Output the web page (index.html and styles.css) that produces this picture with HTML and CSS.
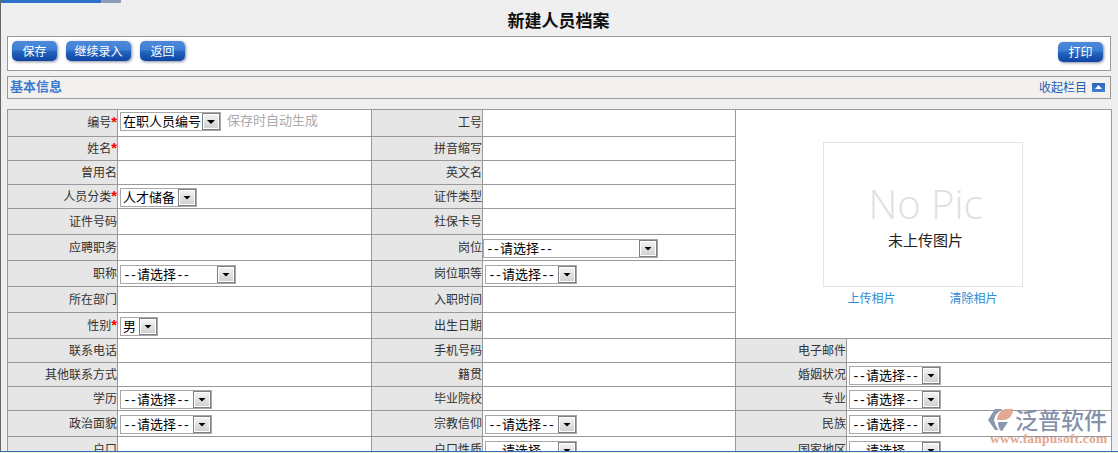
FILE: index.html
```html
<!DOCTYPE html>
<html lang="zh-CN">
<head>
<meta charset="utf-8">
<title>新建人员档案</title>
<link rel="stylesheet" href="styles.css">
</head>
<body>
<div class="page">
  <div class="loadbar"><span class="load-done"></span><span class="load-rest"></span></div>
  <h1 class="title">新建人员档案</h1>
  <div class="toolbar">
    <div class="btn-group">
      <a class="btn btn-s">保存</a>
      <a class="btn btn-l">继续录入</a>
      <a class="btn btn-s">返回</a>
    </div>
    <a class="btn btn-s btn-print">打印</a>
  </div>
  <div class="section">
    <span class="section-title">基本信息</span>
    <span class="collapse">收起栏目<span class="collapse-icon"></span></span>
  </div>
  <table class="form">
    <colgroup><col class="c1"><col class="c2"><col class="c3"><col class="c4"><col class="c5"><col class="c6"></colgroup>
    <tr class="h27">
      <th>编号<span class="req">*</span></th>
      <td class="top"><span class="sel w101"><span class="val">在职人员编号</span><span class="arrow"></span></span><span class="hint">保存时自动生成</span></td>
      <th>工号</th><td></td>
      <td class="photo" colspan="2" rowspan="9">
        <div class="photo-wrap">
          <div class="photo-box"><span class="nopic">No Pic</span><span class="nopic-cn">未上传图片</span></div>
          <div class="photo-links"><a>上传相片</a><a>清除相片</a></div>
        </div>
      </td>
    </tr>
    <tr class="h24"><th>姓名<span class="req">*</span></th><td></td><th>拼音缩写</th><td></td></tr>
    <tr class="h24"><th>曾用名</th><td></td><th>英文名</th><td></td></tr>
    <tr class="h24">
      <th>人员分类<span class="req">*</span></th>
      <td><span class="sel w77"><span class="val">人才储备</span><span class="arrow"></span></span></td>
      <th>证件类型</th><td></td>
    </tr>
    <tr class="h26"><th>证件号码</th><td></td><th>社保卡号</th><td></td></tr>
    <tr class="h26">
      <th>应聘职务</th><td></td><th>岗位</th>
      <td class="flush"><span class="sel w175"><span class="val"><span class="dash">--</span>请选择<span class="dash">--</span></span><span class="arrow"></span></span></td>
    </tr>
    <tr class="h26">
      <th>职称</th>
      <td><span class="sel w116"><span class="val"><span class="dash">--</span>请选择<span class="dash">--</span></span><span class="arrow"></span></span></td>
      <th>岗位职等</th>
      <td><span class="sel w92"><span class="val"><span class="dash">--</span>请选择<span class="dash">--</span></span><span class="arrow"></span></span></td>
    </tr>
    <tr class="h26"><th>所在部门</th><td></td><th>入职时间</th><td></td></tr>
    <tr class="h26">
      <th>性别<span class="req">*</span></th>
      <td><span class="sel w38"><span class="val">男</span><span class="arrow"></span></span></td>
      <th>出生日期</th><td></td>
    </tr>
    <tr class="h24"><th>联系电话</th><td></td><th>手机号码</th><td></td><th>电子邮件</th><td></td></tr>
    <tr class="h24">
      <th>其他联系方式</th><td></td><th>籍贯</th><td></td><th>婚姻状况</th>
      <td><span class="sel w92"><span class="val"><span class="dash">--</span>请选择<span class="dash">--</span></span><span class="arrow"></span></span></td>
    </tr>
    <tr class="h24">
      <th>学历</th>
      <td><span class="sel w92"><span class="val"><span class="dash">--</span>请选择<span class="dash">--</span></span><span class="arrow"></span></span></td>
      <th>毕业院校</th><td></td><th>专业</th>
      <td><span class="sel w92"><span class="val"><span class="dash">--</span>请选择<span class="dash">--</span></span><span class="arrow"></span></span></td>
    </tr>
    <tr class="h26">
      <th>政治面貌</th>
      <td><span class="sel w92"><span class="val"><span class="dash">--</span>请选择<span class="dash">--</span></span><span class="arrow"></span></span></td>
      <th>宗教信仰</th>
      <td><span class="sel w92"><span class="val"><span class="dash">--</span>请选择<span class="dash">--</span></span><span class="arrow"></span></span></td>
      <th>民族</th>
      <td><span class="sel w92"><span class="val"><span class="dash">--</span>请选择<span class="dash">--</span></span><span class="arrow"></span></span></td>
    </tr>
    <tr class="h26">
      <th>户口</th><td></td>
      <th>户口性质</th>
      <td><span class="sel w92"><span class="val"><span class="dash">--</span>请选择<span class="dash">--</span></span><span class="arrow"></span></span></td>
      <th>国家地区</th>
      <td><span class="sel w92"><span class="val"><span class="dash">--</span>请选择<span class="dash">--</span></span><span class="arrow"></span></span></td>
    </tr>
  </table>
  <div class="watermark">
    <svg class="wm-icon" width="26" height="24" viewBox="0 0 26 24">
      <path fill="#8a97ad" d="M7 1h7L7.5 7 6 12l1.5 5 3 5H7L0 12z"/>
      <path fill="#e3a88f" d="M17 1h8c0 6-3 10-9 11H9c0-5 3-9 8-11z"/>
      <path fill="#8a97ad" d="M10 14h10l-6 9h-1c-2-2-3-5-3-9z"/>
    </svg>
    <span class="wm-cn">泛普软件</span>
    <span class="wm-url">www.fanpusoft.com</span>
  </div>
  <span class="corner"></span>
</div>
</body>
</html>
```

FILE: styles.css
```css
* { box-sizing: border-box; }
html, body { margin: 0; padding: 0; height: 453px; overflow: hidden; background: #efefef; }
body { font-family: "Noto Sans CJK SC", "Liberation Sans", sans-serif; font-size: 12px; color: #333; }

.page {
  position: relative;
  height: 452px;
  overflow: hidden;
  border-left: 1px solid #666;
  border-bottom: 1px solid #3a6cb0;
  padding-left: 6px;
}

.loadbar { display: flex; height: 3px; margin-left: -6px; }
.load-done { width: 100px; background: #2f70c9; }
.load-rest { width: 20px; background: #8d9cb9; }

.title {
  margin: 0;
  height: 33px;
  padding: 6px 1px 0 0;
  width: 1104px;
  text-align: center;
  font-size: 17px;
  line-height: 21px;
  font-weight: bold;
  color: #111;
}

.toolbar {
  display: flex;
  justify-content: space-between;
  width: 1104px;
  height: 35px;
  padding: 4px 7px 0 4px;
  background: #fff;
  border: 1px solid #999;
}
.btn-group { display: flex; gap: 9px; }
.btn {
  display: flex;
  align-items: center;
  justify-content: center;
  height: 20px;
  padding-bottom: 2px;
  border-radius: 5px;
  color: #fff;
  font-size: 12px;
  background: linear-gradient(#4c8ad9 0, #3f7fd3 45%, #2a68c2 50%, #1b58b4 70%, #0f45a4 100%);
  box-shadow: 1px 1px 3px rgba(40, 50, 70, .55);
}
.btn-s { width: 45px; }
.btn-l { width: 65px; }
.btn-print { margin-top: 1px; }

.section {
  display: flex;
  justify-content: space-between;
  align-items: center;
  width: 1104px;
  height: 23px;
  margin-top: 5px;
  padding: 0 5px 0 2px;
  background: #f3f0ed;
  border: 1px solid #999;
}
.section-title { font-size: 13px; line-height: 16px; font-weight: bold; color: #3a7bd2; margin-top: -4px; }
.collapse { display: flex; align-items: center; gap: 5px; color: #2260b6; font-size: 12px; line-height: 14px; margin-top: -2px; }
.collapse-icon {
  position: relative;
  width: 13px;
  height: 9px;
  margin-top: 2px;
  background: linear-gradient(#2f68b8, #3f80cf);
}
.collapse-icon::after {
  content: "";
  position: absolute;
  left: 3px;
  top: 2px;
  width: 7px;
  height: 4px;
  background: #fff;
  clip-path: polygon(50% 0, 100% 100%, 0 100%);
}

.form {
  width: 1104px;
  margin-top: 10px;
  table-layout: fixed;
  border-collapse: collapse;
  background: #fff;
}
.c1 { width: 110px; }
.c2 { width: 254px; }
.c3 { width: 111px; }
.c4 { width: 253px; }
.c5 { width: 111px; }
.c6 { width: 265px; }
.form th, .form td { border: 1px solid #999; padding: 0; vertical-align: middle; }
.form th {
  background: #e6e6e6;
  font-weight: normal;
  text-align: right;
  padding: 0 0 2px 0;
  color: #333;
  line-height: 14px;
  white-space: nowrap;
}
.form td { padding-left: 2px; white-space: nowrap; }
.form td.flush { padding-left: 0; }
.form td.top { vertical-align: top; padding-top: 2px; }
.h24 > th, .h24 > td { height: 24px; }
.h26 > th, .h26 > td { height: 26px; }
.h27 > th, .h27 > td { height: 27px; }
.req { color: #f00; font-weight: bold; font-family: "Liberation Sans", sans-serif; font-size: 15px; line-height: 0; }

.sel {
  display: inline-flex;
  vertical-align: middle;
  height: 19px;
  background: #fff;
  border: 1px solid #a8a8a8;
  font-size: 13px;
  line-height: 15px;
  color: #000;
}
.top .sel { vertical-align: top; }
.val { flex: 1; padding-left: 2px; }
.dash { font-family: "Liberation Mono", monospace; font-size: 13px; letter-spacing: -1.3px; margin-right: 1px; }
.arrow {
  position: relative;
  width: 18px;
  background: linear-gradient(#f4f4f4, #cfcfcf);
  border: 1px solid #808080;
  box-shadow: inset 0 0 0 1px #fff;
}
.arrow::after {
  content: "";
  position: absolute;
  left: 4px;
  top: 6px;
  width: 8px;
  height: 4px;
  background: #000;
  clip-path: polygon(0 0, 100% 0, 50% 100%);
}
.w38 { width: 38px; }
.w77 { width: 77px; }
.w92 { width: 92px; }
.w101 { width: 101px; }
.w116 { width: 116px; }
.w175 { width: 175px; }
.hint { display: inline-block; vertical-align: top; margin-left: 6px; font-size: 13px; line-height: 16px; color: #aaa; }

.form td.photo { padding: 0; vertical-align: top; }
.photo-wrap { display: flex; flex-direction: column; align-items: center; padding: 32px 2px 0 0; }
.photo-box {
  display: flex;
  flex-direction: column;
  align-items: center;
  width: 200px;
  height: 145px;
  padding-top: 33px;
  border: 1px solid #e5e5e5;
}
.nopic { font-family: "Open Sans", sans-serif; font-weight: 300; font-size: 40px; line-height: 56px; color: #e0e0e0; margin-left: 6px; }
.nopic-cn { font-size: 15px; line-height: 20px; color: #222; margin: -2px 0 0 6px; }
.photo-links { display: flex; gap: 54px; margin-top: 3px; color: #2d8cd6; line-height: 16px; }

.watermark {
  position: absolute;
  left: 987px;
  top: 407px;
  width: 124px;
  height: 38px;
}
.wm-icon { position: absolute; left: 0; top: 1px; }
.wm-cn {
  position: absolute;
  left: 27px;
  top: 0;
  font-size: 23px;
  line-height: 24px;
  font-weight: 500;
  color: rgba(125, 139, 165, .95);
  white-space: nowrap;
}
.wm-url {
  position: absolute;
  left: 2px;
  top: 26px;
  font-family: "Liberation Serif", serif;
  font-weight: bold;
  font-size: 13.5px;
  line-height: 11px;
  letter-spacing: .2px;
  color: #e3a78f;
  white-space: nowrap;
}
.corner {
  position: absolute;
  right: 0;
  bottom: -1px;
  width: 31px;
  height: 1px;
  background: #9a9a9a;
}
```
